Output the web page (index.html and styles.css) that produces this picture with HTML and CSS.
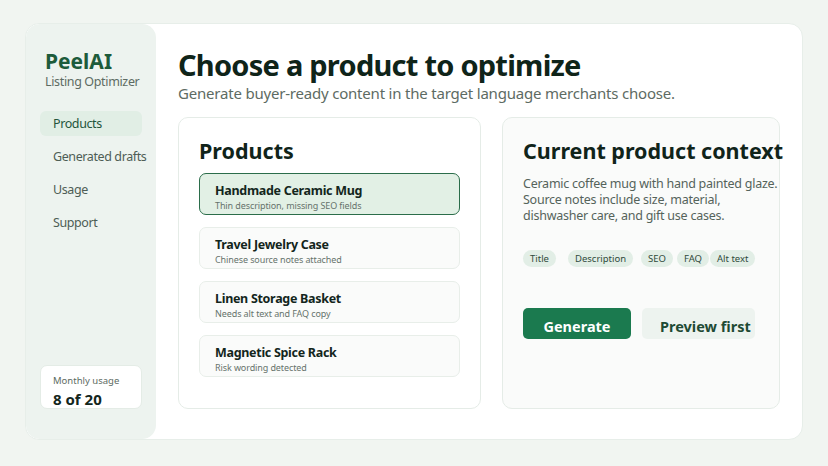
FILE: index.html
```html
<!DOCTYPE html>
<html lang="en">
<head>
  <meta charset="UTF-8" />
  <meta name="viewport" content="width=device-width, initial-scale=1.0"/>
  <title>PeelAI Listing Optimizer</title>
  <link rel="stylesheet" href="styles.css">
</head>
<body>
  <div class="shell">
    <aside class="sidebar">
      <div class="brand">
        <div class="brand-name">PeelAI</div>
        <div class="brand-sub">Listing Optimizer</div>
      </div>
      <nav class="nav">
        <a class="nav-item active" href="#">Products</a>
        <a class="nav-item" href="#">Generated drafts</a>
        <a class="nav-item" href="#">Usage</a>
        <a class="nav-item" href="#">Support</a>
      </nav>
      <div class="usage-card">
        <div class="usage-label">Monthly usage</div>
        <div class="usage-value">8 of 20</div>
      </div>
    </aside>

    <main class="main">
      <h1>Choose a product to optimize</h1>
      <p class="lead">Generate buyer-ready content in the target language merchants choose.</p>

      <div class="panels">
        <section class="panel products">
          <h2>Products</h2>
          <div class="product-list">
            <div class="product selected">
              <div class="product-name">Handmade Ceramic Mug</div>
              <div class="product-note">Thin description, missing SEO fields</div>
            </div>
            <div class="product">
              <div class="product-name">Travel Jewelry Case</div>
              <div class="product-note">Chinese source notes attached</div>
            </div>
            <div class="product">
              <div class="product-name">Linen Storage Basket</div>
              <div class="product-note">Needs alt text and FAQ copy</div>
            </div>
            <div class="product">
              <div class="product-name">Magnetic Spice Rack</div>
              <div class="product-note">Risk wording detected</div>
            </div>
          </div>
        </section>

        <section class="panel context">
          <h2>Current product context</h2>
          <p class="context-text">Ceramic coffee mug with hand painted glaze. Source notes include size, material, dishwasher care, and gift use cases.</p>
          <div class="chips">
            <span class="chip">Title</span>
            <span class="chip">Description</span>
            <span class="chip">SEO</span>
            <span class="chip">FAQ</span>
            <span class="chip">Alt text</span>
          </div>
          <div class="actions">
            <button class="btn primary">Generate</button>
            <button class="btn secondary">Preview first</button>
          </div>
        </section>
      </div>
    </main>
  </div>
</body>
</html>
```

FILE: styles.css
```css
* {
  box-sizing: border-box;
  font-family: 'Noto Sans', 'Open Sans', sans-serif;
}

body {
  margin: 0;
  background-color: #f1f5f1;
  padding: 23px 25px 26px 25px;
  height: 466px;
}

.shell {
  display: flex;
  height: 417px;
  background-color: #ffffff;
  border: 1px solid #e7eee9;
  border-radius: 14px;
  overflow: hidden;
}

.sidebar {
  width: 130px;
  flex-shrink: 0;
  background-color: #edf3ef;
  border-radius: 14px;
  padding: 24px 14px 30px 14px;
  display: flex;
  flex-direction: column;
}

.brand {
  padding-left: 5px;
  white-space: nowrap;
}

.brand-name {
  font-size: 21px;
  font-weight: 700;
  color: #1d5b3b;
  line-height: 26px;
}

.brand-sub {
  font-size: 12.5px;
  letter-spacing: -0.35px;
  color: #5d6b63;
  line-height: 16px;
}

.nav {
  margin-top: 21px;
  display: flex;
  flex-direction: column;
  gap: 8px;
}

.nav-item {
  display: block;
  height: 25px;
  line-height: 25px;
  padding-left: 13px;
  border-radius: 6px;
  font-size: 12.5px;
  letter-spacing: -0.4px;
  color: #4e5d55;
  text-decoration: none;
  white-space: nowrap;
}

.nav-item.active {
  background-color: #e1eee5;
  color: #24553c;
}

.usage-card {
  margin-top: auto;
  background-color: #ffffff;
  border: 1px solid #e4ece6;
  border-radius: 7px;
  padding: 8px 12px 0 12px;
  height: 44px;
}

.usage-label {
  font-size: 9.5px;
  color: #5d6b63;
  line-height: 14px;
}

.usage-value {
  font-size: 15px;
  font-weight: 700;
  color: #13261c;
  line-height: 20px;
  margin-top: 1px;
}

.main {
  flex: 1;
  min-width: 0;
  padding: 23px 22px 30px 22px;
  display: flex;
  flex-direction: column;
}

h1 {
  margin: 0;
  font-size: 29px;
  font-weight: 700;
  letter-spacing: -0.75px;
  color: #0f2419;
  line-height: 36px;
}

.lead {
  margin: 0;
  font-size: 15px;
  letter-spacing: -0.2px;
  color: #5d6b63;
  line-height: 20px;
}

.panels {
  margin-top: 14px;
  flex: 1;
  display: flex;
  gap: 21px;
}

.panel {
  border: 1px solid #e5ece7;
  border-radius: 10px;
  padding: 18px 20px 20px 20px;
}

.products {
  width: 303px;
  flex-shrink: 0;
  background-color: #ffffff;
}

.context {
  flex: 1;
  min-width: 0;
  background-color: #fafbfa;
  padding-right: 0;
}

h2 {
  margin: 0;
  font-size: 21.5px;
  font-weight: 700;
  color: #10241a;
  line-height: 30px;
  white-space: nowrap;
}

.product-list {
  margin-top: 7px;
  display: flex;
  flex-direction: column;
  gap: 12px;
}

.product {
  height: 42px;
  border: 1px solid #e8eee9;
  border-radius: 7px;
  background-color: #fafbfa;
  padding: 8px 15px 0 15px;
}

.product.selected {
  background-color: #e2f0e5;
  border-color: #2b6d4a;
}

.product-name {
  font-size: 12.5px;
  font-weight: 700;
  letter-spacing: -0.3px;
  color: #13261c;
  line-height: 17px;
}

.product-note {
  font-size: 9px;
  letter-spacing: -0.1px;
  color: #66736c;
  line-height: 13px;
}

.context-text {
  margin: 10px 0 0 0;
  width: 262px;
  font-size: 12.5px;
  letter-spacing: -0.25px;
  color: #55635b;
  line-height: 16px;
}

.chips {
  margin-top: 26px;
  display: grid;
  grid-template-columns: 45px 73px 36px 33px auto;
  justify-content: start;
}

.chip {
  justify-self: start;
  height: 17px;
  line-height: 17px;
  padding: 0 7px;
  border-radius: 9px;
  background-color: #e2eee6;
  font-size: 9.5px;
  color: #2f4a3b;
}

.actions {
  margin-top: 41px;
  display: flex;
  gap: 11px;
}

.btn {
  height: 31px;
  border: none;
  border-radius: 5px;
  font-size: 14.5px;
  font-weight: 700;
  padding: 5px 0 0 0;
  cursor: pointer;
  white-space: nowrap;
}

.btn.primary {
  width: 108px;
  background-color: #1b7a4f;
  color: #ffffff;
}

.btn.secondary {
  width: 113px;
  background-color: #edf3ef;
  color: #1e4a34;
  padding-left: 18px;
  text-align: left;
}
```
